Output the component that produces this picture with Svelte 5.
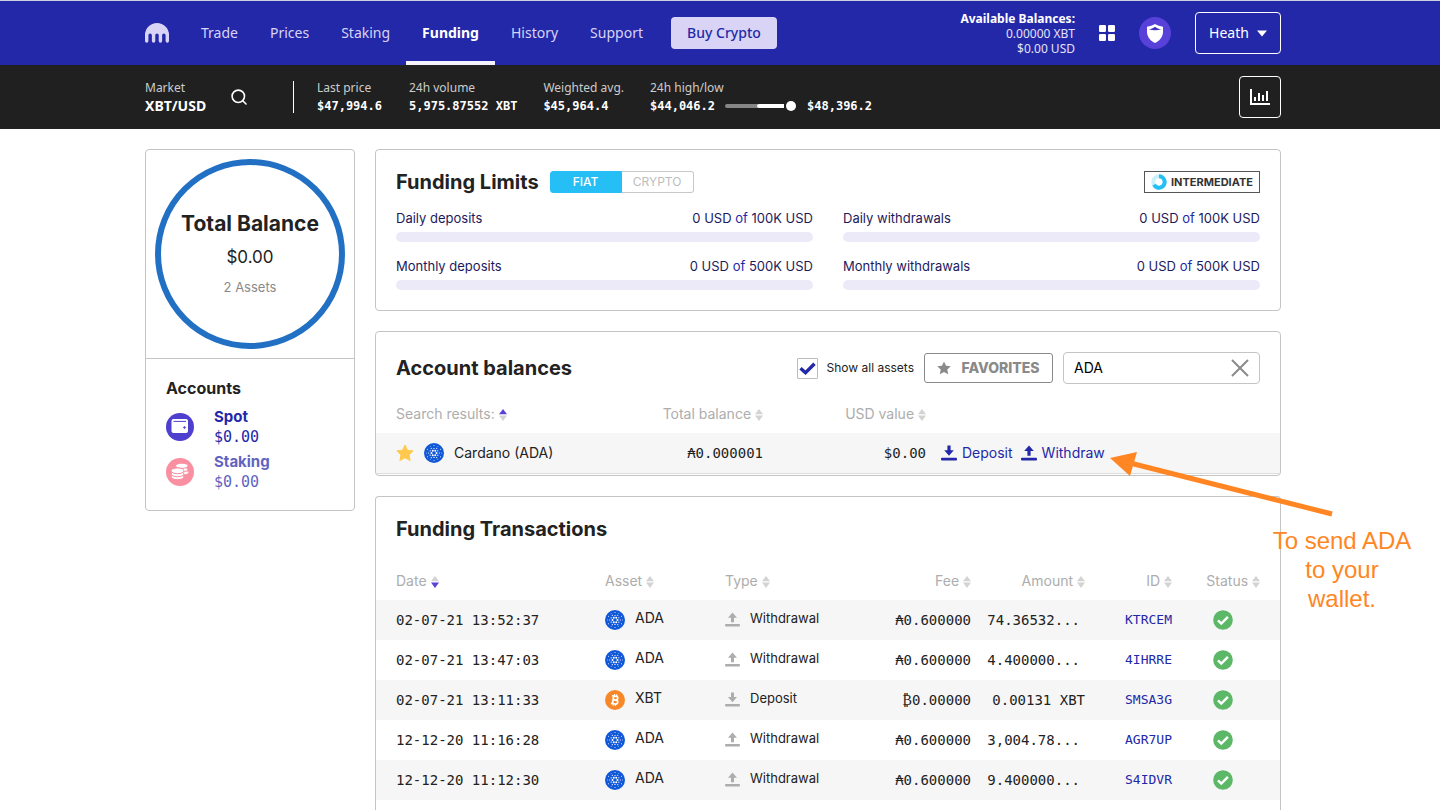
<script>
  const nav = ['Trade', 'Prices', 'Staking', 'Funding', 'History', 'Support'];

  const limits = [
    { label: 'Daily deposits', max: '100K USD' },
    { label: 'Daily withdrawals', max: '100K USD' },
    { label: 'Monthly deposits', max: '500K USD' },
    { label: 'Monthly withdrawals', max: '500K USD' }
  ];

  const columns = [
    { key: 'date', label: 'Date', sorted: 'down' },
    { key: 'asset', label: 'Asset' },
    { key: 'type', label: 'Type' },
    { key: 'fee', label: 'Fee' },
    { key: 'amount', label: 'Amount' },
    { key: 'id', label: 'ID' },
    { key: 'status', label: 'Status' }
  ];

  const transactions = [
    { date: '02-07-21 13:52:37', asset: 'ADA', type: 'Withdrawal', fee: '₳0.600000', amount: '74.36532...', id: 'KTRCEM' },
    { date: '02-07-21 13:47:03', asset: 'ADA', type: 'Withdrawal', fee: '₳0.600000', amount: '4.400000...', id: '4IHRRE' },
    { date: '02-07-21 13:11:33', asset: 'XBT', type: 'Deposit', fee: '₿0.00000', amount: '0.00131 XBT', id: 'SMSA3G' },
    { date: '12-12-20 11:16:28', asset: 'ADA', type: 'Withdrawal', fee: '₳0.600000', amount: '3,004.78...', id: 'AGR7UP' },
    { date: '12-12-20 11:12:30', asset: 'ADA', type: 'Withdrawal', fee: '₳0.600000', amount: '9.400000...', id: 'S4IDVR' }
  ];

  let showAll = $state(true);
  let search = $state('ADA');
  let currency = $state('FIAT');

  // Rings of the Cardano mark: distance from the centre, dot radius, first angle.
  const rings = [
    [2.5, 1, 0],
    [4.4, 0.65, 30],
    [5.4, 0.6, 0],
    [7.6, 0.5, 30],
    [7.6, 0.45, 0]
  ];
  const dots = rings.flatMap(([d, r, start]) =>
    [0, 1, 2, 3, 4, 5].map((i) => {
      const a = ((start + i * 60) * Math.PI) / 180;
      return { x: 10 + d * Math.cos(a), y: 10 + d * Math.sin(a), r };
    })
  );
</script>

{#snippet sort(dir)}
  <svg class="sort" width="8" height="12" viewBox="0 0 8 12" aria-hidden="true">
    <path d="M4 0 8 5.2H0z" fill={dir === 'up' ? '#5741d9' : '#d3d3d3'} />
    <path d="M4 12 8 6.6H0z" fill={dir === 'down' ? '#5741d9' : '#d3d3d3'} />
  </svg>
{/snippet}

{#snippet coin(asset)}
  <svg class="coin" width="20" height="20" viewBox="0 0 20 20" aria-hidden="true">
    {#if asset === 'XBT'}
      <circle cx="10" cy="10" r="10" fill="#f7882a" />
      <g fill="none" stroke="#fff" stroke-width="1.7" transform="rotate(8 10 10)">
        <path d="M6.4 6.2h4.2a1.8 1.8 0 0 1 0 3.7H8m0 0h3a2 2 0 0 1 0 4H6.4M8.1 6v8" />
        <path d="M8.9 4.2v2M11.1 4.2v2M8.9 13.8v2M11.1 13.8v2" stroke-width="1.2" />
      </g>
    {:else}
      <circle cx="10" cy="10" r="10" fill="#1058d8" />
      {#each dots as d}
        <circle cx={d.x} cy={d.y} r={d.r} fill="#fff" />
      {/each}
    {/if}
  </svg>
{/snippet}

{#snippet transfer(kind, size)}
  <svg class="transfer" width={size} height={size} viewBox="0 0 16 16" fill="currentColor" aria-hidden="true">
    {#if kind === 'Deposit'}
      <path d="M6.4.5h3.2v4.7h3.2L8 10.8 3.2 5.2h3.2z" />
    {:else}
      <path d="M6.4 10.8h3.2V6.1h3.2L8 .5 3.2 6.1h3.2z" />
    {/if}
    <rect x="0" y="12.8" width="16" height="2.7" rx="1" />
  </svg>
{/snippet}

<div class="page">
  <header class="topbar">
    <div class="inner">
      <a class="logo" href="#home" aria-label="Home">
        <svg width="24" height="20" viewBox="0 0 24 20" fill="#d9d4f5">
          <path d="M0 12a12 12 0 0 1 24 0v6.1a1.7 1.7 0 0 1-3.4 0V12.3a1.73 1.73 0 0 0-3.47 0v5.8a1.7 1.7 0 0 1-3.4 0V12.3a1.73 1.73 0 0 0-3.46 0v5.8a1.7 1.7 0 0 1-3.4 0V12.3a1.73 1.73 0 0 0-3.47 0v5.8a1.7 1.7 0 0 1-3.4 0z" />
        </svg>
      </a>
      <nav>
        {#each nav as item}
          <a href={'#' + item.toLowerCase()} class:active={item === 'Funding'}>{item}</a>
        {/each}
      </nav>
      <button class="buy">Buy Crypto</button>
      <div class="available">
        <strong>Available Balances:</strong>
        <span>0.00000 XBT</span>
        <span>$0.00 USD</span>
      </div>
      <button class="plain" aria-label="Apps">
        <svg width="16" height="16" viewBox="0 0 16 16" fill="#fff">
          <rect width="7" height="7" rx="1.2" /><rect x="9" width="7" height="7" rx="1.2" />
          <rect y="9" width="7" height="7" rx="1.2" /><rect x="9" y="9" width="7" height="7" rx="1.2" />
        </svg>
      </button>
      <button class="plain" aria-label="Security">
        <svg width="32" height="32" viewBox="0 0 32 32">
          <circle cx="16" cy="16" r="16" fill="#5741d9" />
          <path d="M16 7c2.600 1.400 5.200 2.300 8 2.800v5.200c0 5-4 9.500-8 11-4-1.500-8-6-8-11V9.800C10.800 9.300 13.400 8.400 16 7z" fill="#fff" />
          <path d="M9.600 12.600C12 12.200 14.200 11.300 16 9.800c1.800 1.500 4 2.400 6.400 2.800-4.200.9-8.600.9-12.800 0z" fill="#3f30bd" />
        </svg>
      </button>
      <button class="user">Heath
        <svg width="10" height="7" viewBox="0 0 10 7" aria-hidden="true"><path d="M0 .5h10L5 6.500z" fill="#fff" /></svg>
      </button>
    </div>
  </header>

  <section class="marketbar">
    <div class="inner">
      <div class="market">
        <span class="label">Market</span>
        <strong>XBT/USD</strong>
      </div>
      <button class="plain find" aria-label="Search markets">
        <svg width="16" height="16" viewBox="0 0 16 16" fill="none" stroke="#fff" stroke-width="1.600">
          <circle cx="7.300" cy="7.300" r="6.200" /><path d="m11.800 11.800 3.200 3.200" stroke-linecap="round" />
        </svg>
      </button>
      <dl class="stats">
        <div><dt>Last price</dt><dd>$47,994.6</dd></div>
        <div><dt>24h volume</dt><dd>5,975.87552 XBT</dd></div>
        <div><dt>Weighted avg.</dt><dd>$45,964.4</dd></div>
        <div>
          <dt>24h high/low</dt>
          <dd class="range">$44,046.2
            <svg width="72" height="12" viewBox="0 0 72 12" aria-hidden="true">
              <rect y="4" width="34" height="4" rx="2" fill="#858585" />
              <path d="M34 4h25v4H34a2 2 0 0 1 0-4z" fill="#fff" /><circle cx="66" cy="6" r="5" fill="#fff" />
            </svg>
            $48,396.2</dd>
        </div>
      </dl>
      <button class="chart" aria-label="Chart">
        <svg width="20" height="16" viewBox="0 0 20 16" fill="#fff">
          <path d="M0 0h2v14h18v2H0zM4 8h2v4H4zM8 4h2v8H8zM12 6h2v6h-2zM16 2h2v10h-2z" />
        </svg>
      </button>
    </div>
  </section>

  <div class="content">
    <aside class="card side">
      <div class="balance">
        <div class="ring">
          <h2>Total Balance</h2>
          <p class="total">$0.00</p>
          <p class="count">2 Assets</p>
        </div>
      </div>
      <div class="accounts">
        <h3>Accounts</h3>
        <a class="account" href="#spot">
          <svg width="28" height="28" viewBox="0 0 28 28" aria-hidden="true">
            <circle cx="14" cy="14" r="14" fill="#4f3fce" />
            <rect x="5.500" y="6" width="16.500" height="14" rx="2" fill="#fff" />
            <path d="M7.500 8.400H20" stroke="#4f3fce" stroke-width="1" />
            <path d="m18.500 12.900 1.500 1.500-1.500 1.500-1.500-1.500z" fill="#4f3fce" />
          </svg>
          <span><b>Spot</b><span class="mono">$0.00</span></span>
        </a>
        <a class="account faded" href="#staking">
          <svg width="28" height="28" viewBox="0 0 28 28" aria-hidden="true">
            <circle cx="14" cy="14" r="14" fill="#f98fa0" />
            <g fill="#fff" stroke="#f98fa0" stroke-width="1">
              <ellipse cx="16.500" cy="14.500" rx="6.300" ry="2.600" /><ellipse cx="15.500" cy="11.500" rx="6.300" ry="2.600" /><ellipse cx="15.800" cy="7.800" rx="6.300" ry="2.600" />
              <ellipse cx="11.500" cy="19" rx="6.500" ry="2.700" /><ellipse cx="11.500" cy="16" rx="6.500" ry="2.700" /><ellipse cx="11.500" cy="12.800" rx="6.500" ry="2.900" />
            </g>
          </svg>
          <span><b>Staking</b><span class="mono">$0.00</span></span>
        </a>
      </div>
    </aside>

    <main>
      <section class="card limits">
        <div class="heading">
          <h2>Funding Limits</h2>
          <div class="toggle">
            {#each ['FIAT', 'CRYPTO'] as c}
              <button class:on={currency === c} aria-pressed={currency === c} onclick={() => (currency = c)}>{c}</button>
            {/each}
          </div>
          <a class="tier" href="#tier">
            <svg width="16" height="16" viewBox="0 0 16 16" fill="none" stroke-width="4" aria-hidden="true">
              <circle cx="8" cy="8" r="5.700" stroke="#c9f1fc" /><path d="M8 2.300a5.700 5.700 0 1 1-5 8.500" stroke="#25bff5" />
            </svg>
            INTERMEDIATE
          </a>
        </div>
        <div class="meters">
          {#each limits as l}
            <div class="meter">
              <div class="line"><span>{l.label}</span><span>0 USD <i>of</i> {l.max}</span></div>
              <div class="bar"></div>
            </div>
          {/each}
        </div>
      </section>

      <section class="card balances">
        <div class="heading">
          <h2>Account balances</h2>
          <label class="all">
            <span class="box">
              <input type="checkbox" bind:checked={showAll} />
              {#if showAll}
                <svg width="17" height="13" viewBox="0 0 17 13" aria-hidden="true"><path d="m1.500 6.200 5 4.500L15.500 1.800" fill="none" stroke="#2328a8" stroke-width="3.400" /></svg>
              {/if}
            </span>
            Show all assets
          </label>
          <button class="favorites">
            <svg width="14" height="14" viewBox="0 0 18 18" fill="#8a8a8a" aria-hidden="true"><path d="m9 .5 2.600 5.600 6.100.7-4.500 4.200 1.200 6L9 14l-5.400 3 1.200-6L.3 6.800l6.100-.7z" /></svg>
            FAVORITES
          </button>
          <div class="search">
            <input type="text" aria-label="Search assets" bind:value={search} />
            <button class="plain" aria-label="Clear search" onclick={() => (search = '')}>
              <svg width="18" height="18" viewBox="0 0 18 18" fill="none" stroke="#8a8a8a" stroke-width="2"><path d="m1 1 16 16M17 1 1 17" /></svg>
            </button>
          </div>
        </div>
        <table>
          <colgroup><col class="b-name" /><col class="b-usd" /><col /></colgroup>
          <thead>
            <tr>
              <th class="split"><span>Search results: {@render sort('up')}</span><span>Total balance {@render sort()}</span></th>
              <th class="right">USD value {@render sort()}</th>
              <td></td>
            </tr>
          </thead>
          <tbody>
            <tr>
              <td>
                <div class="asset-row">
                  <svg width="18" height="18" viewBox="0 0 18 18" fill="#ffc94d" stroke="#ffc94d" stroke-linejoin="round" aria-hidden="true"><path d="m9 1 2.500 5.200 5.600.7-4.100 3.900 1.100 5.700L9 13.700l-5.100 2.800L5 10.800.9 6.900l5.600-.7z" /></svg>
                  {@render coin('ADA')}
                  <span>Cardano (ADA)</span>
                  <span class="mono sum">₳0.000001</span>
                </div>
              </td>
              <td class="mono right">$0.00</td>
              <td>
                <div class="actions">
                  <a href="#deposit">{@render transfer('Deposit', 16)}Deposit</a>
                  <a href="#withdraw">{@render transfer('Withdrawal', 16)}Withdraw</a>
                </div>
              </td>
            </tr>
          </tbody>
        </table>
      </section>

      <section class="card transactions">
        <h2>Funding Transactions</h2>
        <table>
          <colgroup>
            {#each columns as c}<col class={'c-' + c.key} />{/each}
          </colgroup>
          <thead>
            <tr>
              {#each columns as c}<th class={c.key}>{c.label} {@render sort(c.sorted)}</th>{/each}
            </tr>
          </thead>
          <tbody>
            {#each transactions as t}
              <tr>
                <td class="date mono">{t.date}</td>
                <td class="asset"><div class="pair">{@render coin(t.asset)}<span>{t.asset}</span></div></td>
                <td class="type"><div class="pair kind">{@render transfer(t.type, 15)}<span>{t.type}</span></div></td>
                <td class="fee mono">{t.fee}</td>
                <td class="amount mono" class:clipped={t.amount.endsWith('...')}>{t.amount}</td>
                <td class="id mono"><a href={'#' + t.id}>{t.id}</a></td>
                <td class="status">
                  <svg width="20" height="20" viewBox="0 0 20 20" role="img" aria-label="Success"><circle cx="10" cy="10" r="9.800" fill="#5cb766" /><path d="m5 10.400 3.300 3.200 6.600-6.800" fill="none" stroke="#fff" stroke-width="2.500" /></svg>
                </td>
              </tr>
            {/each}
          </tbody>
        </table>
      </section>

      <div class="note">
        <svg width="224" height="66" viewBox="0 0 224 66" aria-hidden="true">
          <path d="M222 62 22 11.500" stroke="#ff8622" stroke-width="5" /><path d="M0 6 27 0 20 24z" fill="#ff8622" />
        </svg>
        <p>To send ADA<br />to your<br />wallet.</p>
      </div>
    </main>
  </div>
</div>

<style>
  :global(body) { margin: 0; background: #fff; }
  .page {
    height: 100vh;
    overflow: hidden;
    display: flex;
    flex-direction: column;
    font: 14px/20px Inter, sans-serif;
    color: #222;
  }
  *, *::before { box-sizing: border-box; }
  h2, h3, p, dl, dd { margin: 0; }
  a { color: #2328a8; text-decoration: none; }
  button { font: inherit; cursor: pointer; }
  svg { flex: none; display: block; }
  .mono { font-family: "DejaVu Sans Mono", monospace; }
  .plain { border: 0; padding: 0; background: none; }
  .right { text-align: right; }

  .topbar, .marketbar { padding-right: 14px; font-family: "Noto Sans", sans-serif; flex: none; }
  .topbar { background: #2328a8; border-top: 1px solid #ccd0e0; }
  .marketbar { background: #202020; color: #fff; }
  .inner { max-width: 1136px; height: 64px; margin: 0 auto; display: flex; align-items: center; }
  .logo { margin-right: 16px; }
  nav { display: flex; align-self: stretch; }
  nav a { position: relative; display: flex; align-items: center; padding: 0 16px; color: #d9d4f5; }
  nav a.active { color: #fff; font-weight: 700; }
  nav a.active::before { content: ""; position: absolute; left: 0; right: 0; bottom: 0; height: 4px; background: #f4f2fd; }
  .buy { width: 106px; height: 32px; margin-left: 12px; padding: 0; border: 0; border-radius: 4px; background: #d9d4f5; color: #2328a8; font-weight: 500; }
  .available { margin: 0 24px 0 auto; display: flex; flex-direction: column; align-items: flex-end; font-size: 12px; line-height: 15px; color: #e4e1f8; }
  .available strong { color: #fff; }
  .user { margin-left: 24px; width: 86px; height: 42px; padding: 0; border: 1px solid #fff; border-radius: 4px; background: none; color: #fff; display: flex; align-items: center; justify-content: center; gap: 8px; }
  .topbar .plain + .plain { margin-left: 24px; }

  .market { display: flex; flex-direction: column; font-size: 12px; line-height: 18px; width: 62px; }
  .market strong { font-size: 14px; }
  .label, dt { color: #ccc; }
  .find { margin: 0 46px 0 24px; }
  .stats { display: flex; gap: 26px; border-left: 1px solid #fff; padding-left: 23px; height: 32px; align-items: center; }
  dt { font-size: 12px; line-height: 18px; }
  dd { font: 700 12px/18px "DejaVu Sans Mono", monospace; white-space: nowrap; }
  .stats div { min-width: 66px; }
  .range { display: flex; align-items: center; gap: 10px; }
  .chart { margin-left: auto; width: 42px; height: 42px; border: 1px solid #fff; border-radius: 4px; background: none; display: grid; place-items: center; padding: 0; }

  .content {
    flex: 1;
    width: calc(100% - 14px);
    max-width: 1136px;
    margin-right: 14px;
    align-self: center;
    padding-top: 20px;
    display: flex;
    align-items: flex-start;
    gap: 20px;
    min-height: 0;
  }
  .card { border: 1px solid #c4c4c4; border-radius: 4px; background: #fff; }
  h2 { font-size: 20px; line-height: 26px; font-weight: 700; }

  .side { flex: none; width: 210px; }
  .balance { padding: 9px; border-bottom: 1px solid #c4c4c4; }
  .ring { height: 190px; border: 6px solid #2270c4; border-radius: 50%; text-align: center; padding-top: 46px; }
  .ring h2 { font-size: 21px; }
  .total { font-size: 17px; line-height: 24px; margin-top: 8px; }
  .count { font-size: 13px; line-height: 20px; margin-top: 8px; color: #8a8a8a; }
  .accounts { padding: 19px 20px 12px; }
  h3 { font-size: 16px; line-height: 20px; font-weight: 700; margin: 0 0 10px; }
  .account { display: flex; align-items: center; gap: 20px; height: 38px; margin-bottom: 7px; }
  .account span { display: flex; flex-direction: column; line-height: 20px; }
  .account b { font-size: 15px; line-height: 20px; }
  .faded > span { opacity: 0.720; }
  .account .mono { font-size: 15px; }

  main { flex: 1; min-width: 0; align-self: stretch; display: flex; flex-direction: column; gap: 20px; position: relative; }
  .heading { display: flex; align-items: center; }
  .limits { padding: 19px 20px 20px; }
  .toggle { display: flex; margin-left: 11px; }
  .toggle button { width: 72px; height: 22px; padding: 0; border: 1px solid #c8c8c8; background: #fff; color: #bdbdbd; font-size: 12px; line-height: 20px; }
  .toggle button:first-child { border-radius: 3px 0 0 3px; }
  .toggle button:last-child { border-radius: 0 3px 3px 0; border-left: 0; }
  .toggle button.on { background: #25bff5; border-color: #25bff5; color: #fff; font-weight: 500; }
  .tier { margin-left: auto; width: 116px; height: 22px; border: 1px solid #555; display: flex; align-items: center; justify-content: center; gap: 4px; color: #333; font-weight: 700; font-size: 11px; line-height: 20px; }
  .meters { display: grid; grid-template-columns: 1fr 1fr; gap: 14px 30px; margin-top: 13px; }
  .line { display: flex; justify-content: space-between; font-size: 13px; line-height: 20px; color: #1d1a5c; }
  .line i { font-style: normal; color: #2328a8; }
  .bar { height: 10px; border-radius: 5px; background: #ece9f9; }
  .meter { display: grid; gap: 4px; }

  .balances { padding: 20px 0 1px; }
  .balances .heading { padding: 0 20px; }
  .all { margin-left: auto; display: flex; align-items: center; gap: 9px; font-size: 12px; }
  .box { display: grid; place-items: center; width: 21px; height: 21px; }
  .box > * { grid-area: 1 / 1; }
  .box input { appearance: none; width: 21px; height: 21px; margin: 0; border: 1px solid #bbb; border-radius: 1px; }
  .favorites { width: 129px; height: 30px; margin-left: 10px; padding: 0; border: 1px solid #8a8a8a; border-radius: 3px; background: #fff; color: #8a8a8a; font-weight: 800; font-size: 14px; display: flex; align-items: center; justify-content: center; gap: 10px; }
  .search { width: 197px; height: 32px; margin-left: 10px; padding: 0 10px; border: 1px solid #c4c4c4; border-radius: 4px; display: flex; align-items: center; }
  .search input { flex: 1; min-width: 0; border: 0; padding: 0; outline: 0; font: inherit; color: #000; background: none; }

  table { width: 100%; border-collapse: collapse; table-layout: fixed; }
  th { font-weight: 400; color: #adadad; text-align: left; padding: 0; white-space: nowrap; }
  td { padding: 0; height: 40px; white-space: nowrap; }
  .sort { display: inline-block; vertical-align: -2px; }
  tbody tr:nth-child(odd) { background: #f6f6f6; }
  .balances table { margin-top: 10px; }
  .balances thead tr > * { height: 39px; }
  .balances tbody tr { border-bottom: 1px solid #ddd; }
  .b-name { width: 387px; }
  .b-usd { width: 163px; }
  .split { padding-left: 20px; }
  .split span:last-child { float: right; }
  .asset-row { display: flex; align-items: center; padding-left: 20px; }
  .asset-row .coin { margin: 0 10px; }
  .sum { margin-left: auto; }
  .actions { display: flex; gap: 8px; padding-left: 15px; }
  .actions a { display: flex; align-items: center; gap: 5px; }

  .transactions { flex: 1; border-bottom: 0; border-radius: 4px 4px 0 0; padding-top: 19px; }
  .transactions h2 { padding-left: 20px; }
  .transactions th { height: 38px; }
  .transactions table { margin-top: 20px; }
  .c-date { width: 229px; }
  .c-asset { width: 120px; }
  .c-fee { width: 104px; }
  .c-amount { width: 114px; }
  .c-id { width: 87px; }
  .c-status { width: 108px; }
  .date { padding-left: 20px; }
  .fee, .amount, .id, th.status { text-align: right; }
  th.status { padding-right: 20px; }
  td.status { padding-left: 41px; }
  td.clipped { padding-right: 5px; }
  td.id { font-size: 13px; }
  .pair { display: flex; align-items: center; gap: 10px; }
  .pair span { margin-bottom: 4px; }
  .kind { font-size: 13px; }
  .kind svg { color: #adadad; }

  .note { position: absolute; left: 735px; top: 303px; color: #ff8622; }
  .note p { margin: 8px 0 0 162px; width: 140px; text-align: center; font: 24px/29px "Liberation Sans", sans-serif; white-space: nowrap; }
</style>
